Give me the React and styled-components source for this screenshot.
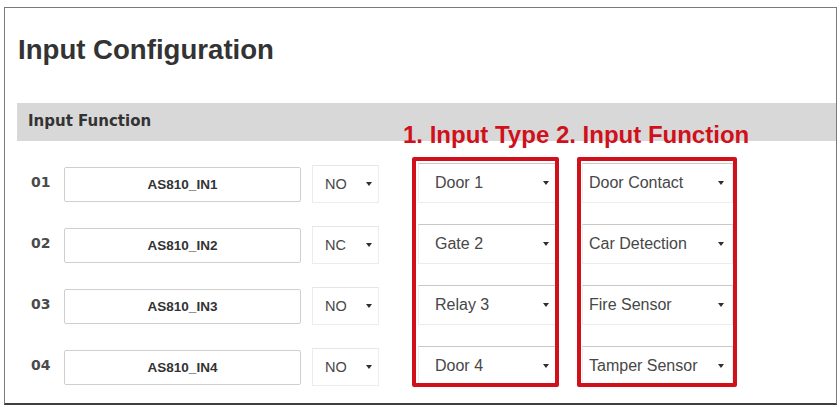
import { Fragment } from "react";
import styled, { createGlobalStyle } from "styled-components";

const GlobalStyle = createGlobalStyle`
  html, body {
    margin: 0;
    padding: 0;
    background: #fff;
  }
  body {
    font-family: "Liberation Sans", Arial, sans-serif;
  }
`;

const Frame = styled.section`
  margin: 7px 3px 0 4px;
  padding: 0 0 17px;
  border: 1px solid #7a7a7a;
  border-bottom: 2px solid #3e3e3e;
  background: #fff;
`;

const Title = styled.h1`
  margin: 26px 0 0 13px;
  font-family: "Liberation Sans", Arial, sans-serif;
  font-size: 27.6px;
  line-height: 32px;
  font-weight: 700;
  color: #333;
`;

const SectionBar = styled.div`
  margin: 37px 0 0 12px;
  height: 38px;
  box-sizing: border-box;
  padding: 10px 0 0 11px;
  background: #d8d8d8;
  font-family: "DejaVu Sans", Verdana, sans-serif;
  font-size: 15px;
  line-height: 17px;
  font-weight: 700;
  color: #333;
`;

const Table = styled.div`
  position: relative;
  margin-top: 22px;
  padding-left: 26px;
  display: grid;
  grid-template-columns: 33px 237px 78px 177px 177px;
  grid-template-rows: repeat(4, 40px);
  row-gap: 21px;
  align-items: end;
`;

const Annotation = styled.div`
  position: absolute;
  left: 398px;
  top: -42px;
  font-family: "Liberation Sans", Arial, sans-serif;
  font-size: 24px;
  line-height: 28px;
  font-weight: 700;
  color: #d0101b;
  white-space: nowrap;
  z-index: 2;
`;

const Index = styled.div`
  grid-row: ${(p) => p.$row};
  grid-column: 1;
  align-self: center;
  margin-top: -2px;
  font-family: "DejaVu Sans", Verdana, sans-serif;
  font-size: 14px;
  font-weight: 700;
  color: #4a4a4a;
`;

const NameField = styled.div`
  grid-row: ${(p) => p.$row};
  grid-column: 2;
  height: 35px;
  box-sizing: border-box;
  margin-bottom: 1px;
  border: 1px solid #cfcfcf;
  border-radius: 2px;
  display: flex;
  align-items: center;
  justify-content: center;
  font-size: 13.5px;
  font-weight: 700;
  color: #333;
`;

const Dropdown = styled.div`
  grid-row: ${(p) => p.$row};
  grid-column: ${(p) => p.$column};
  justify-self: end;
  width: ${(p) => p.$width}px;
  height: ${(p) => p.$height}px;
  box-sizing: border-box;
  padding: 0 ${(p) => p.$padRight}px 0 ${(p) => p.$padLeft}px;
  border: 1px solid #ececec;
  border-top-color: ${(p) => (p.$framed ? "#c8c8c8" : "#e6e6e6")};
  display: flex;
  align-items: center;
  justify-content: space-between;
  font-size: ${(p) => p.$fontSize}px;
  color: #474747;
  white-space: nowrap;

  &::after {
    content: "";
    border-left: 3px solid transparent;
    border-right: 3px solid transparent;
    border-top: 4px solid #2e2e2e;
  }
`;

const Highlight = styled.div`
  grid-column: ${(p) => p.$column};
  grid-row: 1 / 5;
  align-self: stretch;
  justify-self: end;
  width: ${(p) => p.$width}px;
  margin: -6px ${(p) => p.$right}px -1px 0;
  border: 4px solid #d0101b;
  border-radius: 2px;
  box-sizing: border-box;
  pointer-events: none;
  z-index: 1;
`;

const inputs = [
  { id: "01", name: "AS810_IN1", mode: "NO", type: "Door 1", fn: "Door Contact" },
  { id: "02", name: "AS810_IN2", mode: "NC", type: "Gate 2", fn: "Car Detection" },
  { id: "03", name: "AS810_IN3", mode: "NO", type: "Relay 3", fn: "Fire Sensor" },
  { id: "04", name: "AS810_IN4", mode: "NO", type: "Door 4", fn: "Tamper Sensor" },
];

export default function App() {
  return (
    <>
      <GlobalStyle />
      <Frame>
        <Title>Input Configuration</Title>
        <SectionBar>Input Function</SectionBar>
        <Table>
          <Annotation>1. Input Type 2. Input Function</Annotation>
          {inputs.map((row, i) => (
            <Fragment key={row.id}>
              <Index $row={i + 1}>{row.id}</Index>
              <NameField $row={i + 1}>{row.name}</NameField>
              <Dropdown
                $row={i + 1}
                $column={3}
                $width={67}
                $height={38}
                $padLeft={12}
                $padRight={6}
                $fontSize={14.5}
              >
                {row.mode}
              </Dropdown>
              <Dropdown
                $row={i + 1}
                $column={4}
                $framed
                $width={138}
                $height={40}
                $padLeft={16}
                $padRight={6}
                $fontSize={16}
              >
                {row.type}
              </Dropdown>
              <Dropdown
                $row={i + 1}
                $column={5}
                $framed
                $width={151}
                $height={40}
                $padLeft={6}
                $padRight={8}
                $fontSize={16}
              >
                {row.fn}
              </Dropdown>
            </Fragment>
          ))}
          <Highlight $column={4} $width={147} $right={-3} />
          <Highlight $column={5} $width={160} $right={-4} />
        </Table>
      </Frame>
    </>
  );
}
